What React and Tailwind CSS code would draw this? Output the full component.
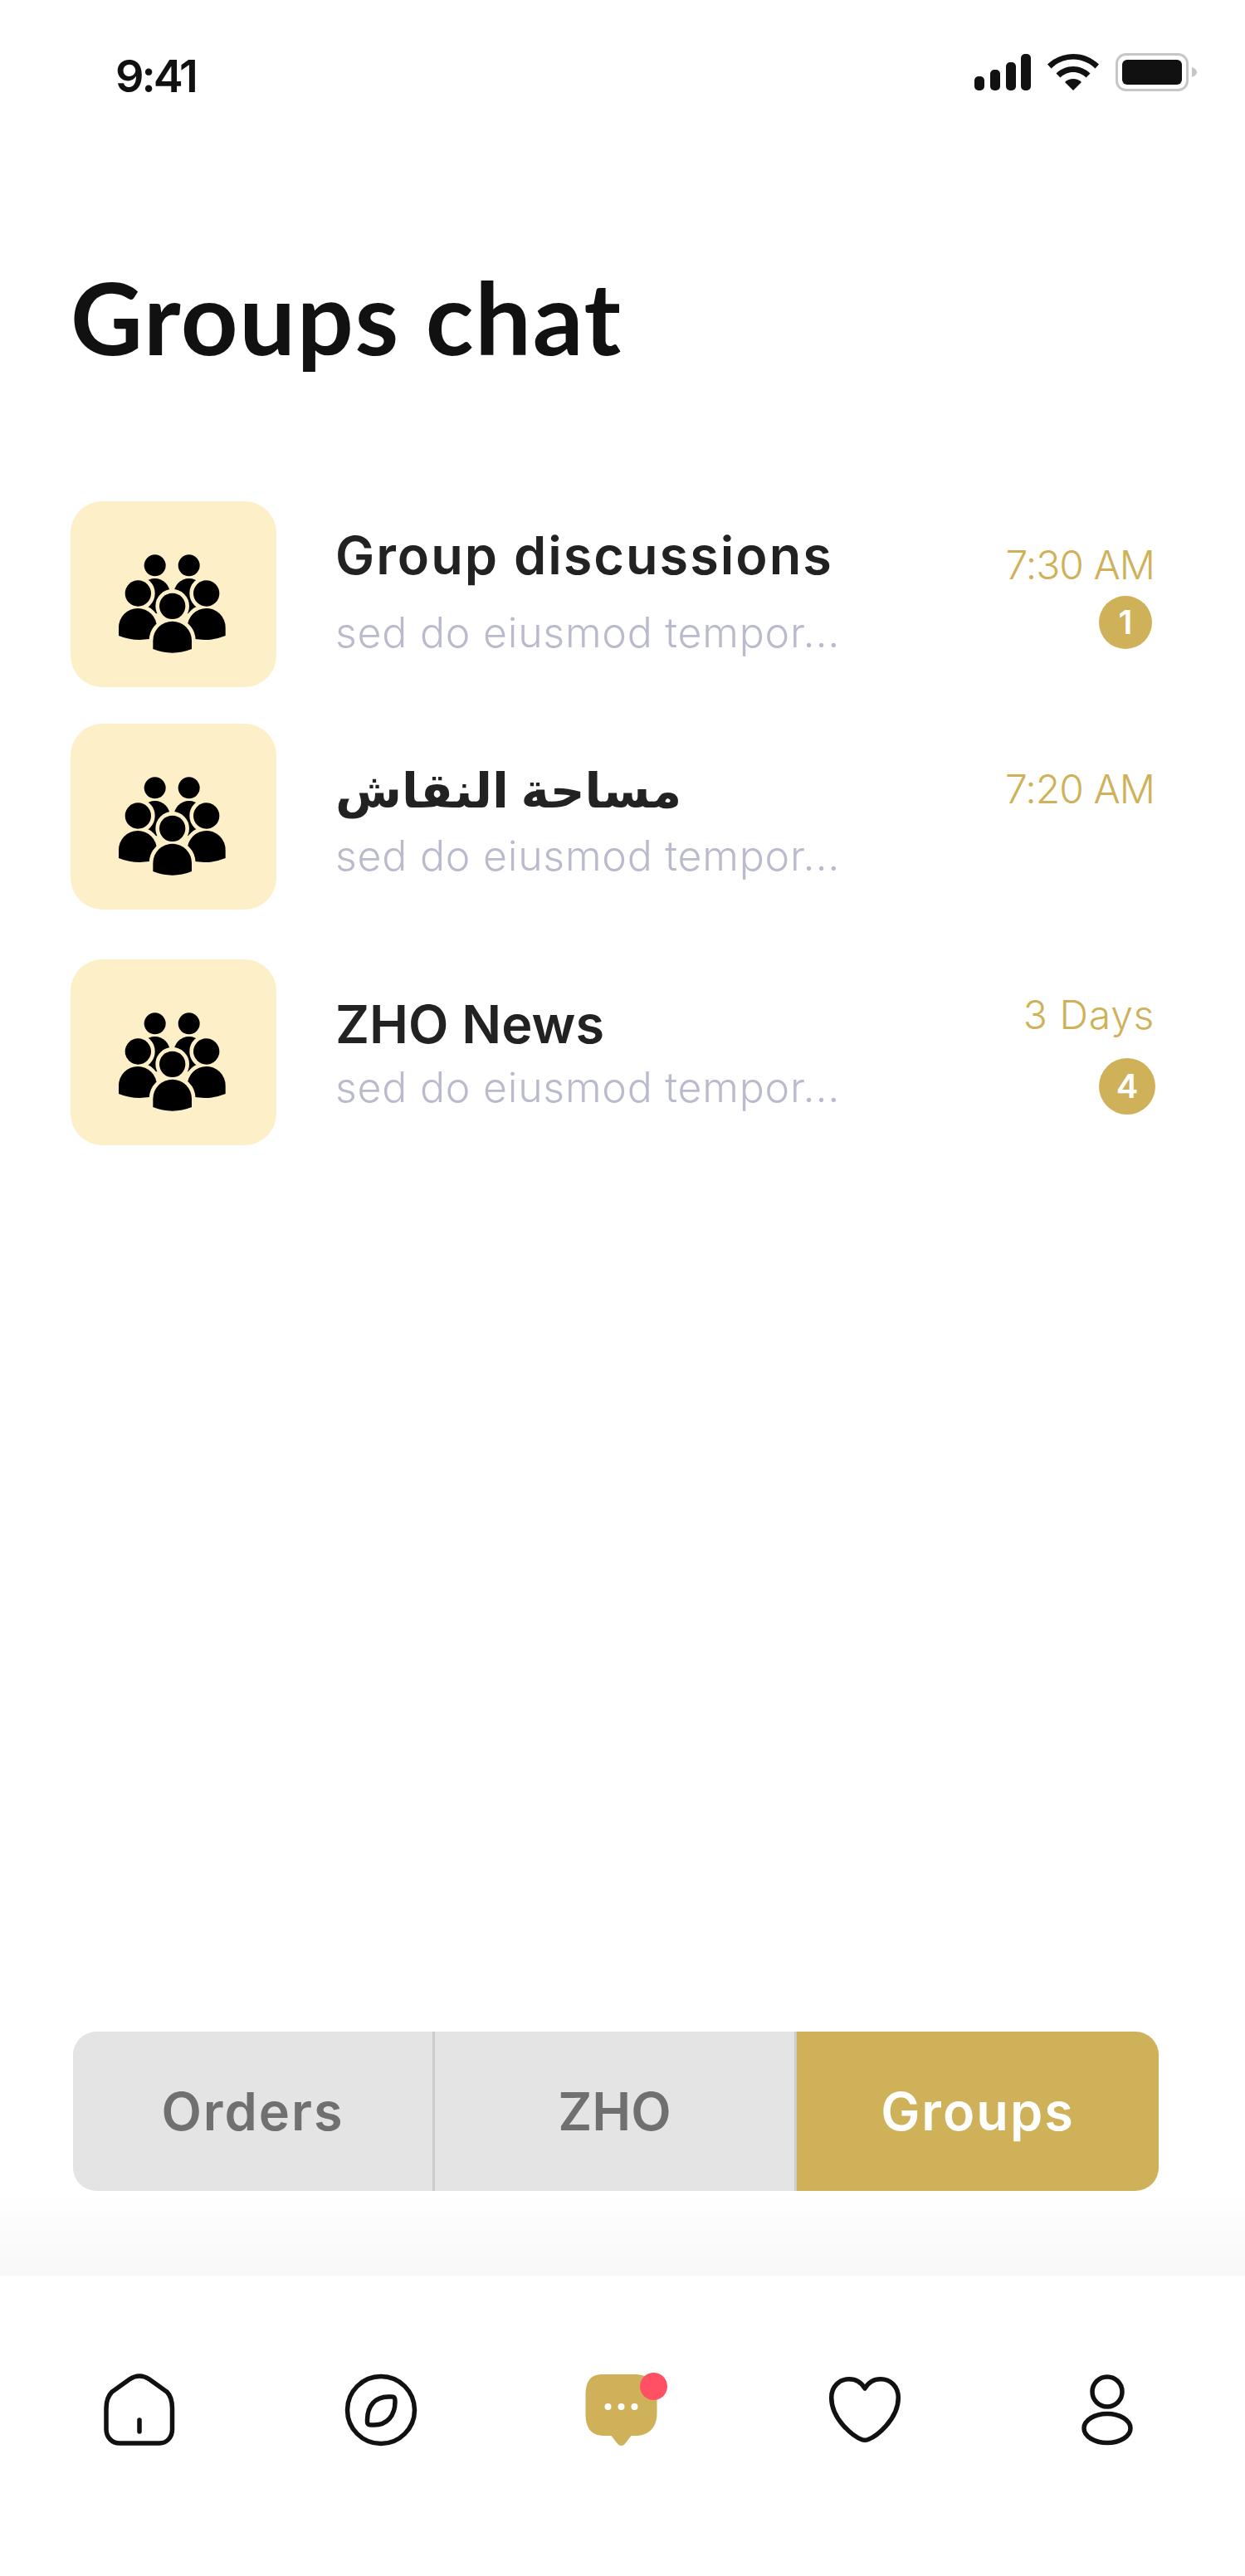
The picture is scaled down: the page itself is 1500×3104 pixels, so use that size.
import React from "react";

const ROWS = [
  {
    title: "Group discussions",
    titleClass: "text-[63px] tracking-[2px]",
    time: "7:30 AM",
    timeClass: "tracking-[-1px]",
    badge: "1",
    spacing: "mt-[162px]",
    textTop: "pt-[35px]",
    subTop: "mt-[39px]",
    timeTop: "pt-[53px]",
    badgeClass: "mt-[13px] mr-[2px] h-[64px] w-[64px]",
  },
  {
    title: "مساحة النقاش",
    titleClass: "text-[58px]",
    time: "7:20 AM",
    timeClass: "tracking-[-1px]",
    spacing: "mt-[44px]",
    textTop: "pt-[50px]",
    subTop: "mt-[25px]",
    timeTop: "pt-[55px]",
  },
  {
    title: "ZHO News",
    titleClass: "text-[63px] tracking-[0px]",
    time: "3 Days",
    timeClass: "tracking-[0.7px]",
    badge: "4",
    spacing: "mt-[60px]",
    textTop: "pt-[48px]",
    subTop: "mt-[22px]",
    timeTop: "pt-[43px]",
    badgeClass: "mt-[28px] -mr-[2px] h-[68px] w-[68px]",
  },
];

// drawn in reference pixels x3, each person gets a cream halo behind it
function Person({ head, body }) {
  return (
    <>
      <g fill="#fdefc8" stroke="#fdefc8" strokeWidth="28">
        <circle cx={head[0]} cy={head[1]} r="47" />
        <path d={body} />
      </g>
      <g fill="#000">
        <circle cx={head[0]} cy={head[1]} r="47" />
        <path d={body} />
      </g>
    </>
  );
}

function GroupIcon() {
  return (
    <svg width="135" height="124" viewBox="240 250 405 372" aria-hidden>
      <circle cx="380" cy="296" r="39" fill="#000" />
      <circle cx="503" cy="296" r="39" fill="#000" />
      <path d="M325 470V400A55 57 0 0 1 435 400V470Z" fill="#000" />
      <path d="M448 470V400A55 57 0 0 1 558 400V470Z" fill="#000" />
      <Person head={[319, 397]} body="M249 550V520A69 69 0 0 1 387 520V555Q318 578 249 550Z" />
      <Person head={[566, 397]} body="M497 555V520A69 69 0 0 1 635 520V550Q566 578 497 555Z" />
      <Person head={[443, 443]} body="M373 598V568A70 70 0 0 1 513 568V598Q443 626 373 598Z" />
    </svg>
  );
}

function GroupRow({ row }) {
  return (
    <div className={`flex h-[224px] ${row.spacing}`}>
      <div className="flex h-[224px] w-[248px] shrink-0 items-center justify-center rounded-[38px] bg-[#fdefc8] pt-[24px] pr-[3px]">
        <GroupIcon />
      </div>
      <div className={`ml-[71px] flex-1 ${row.textTop}`}>
        <p className={`h-[60px] leading-[60px] font-semibold text-[#222222] ${row.titleClass}`}>{row.title}</p>
        <p className={`text-[50px] leading-[48px] font-light tracking-[0.75px] text-[#b9bacb] ${row.subTop}`}>sed do eiusmod tempor...</p>
      </div>
      <div className={`flex flex-col items-end ${row.timeTop}`}>
        <p className={`-mr-[1px] text-[48px] leading-[48px] font-light text-[#cfb159] ${row.timeClass}`}>{row.time}</p>
        {row.badge ? (
          <span className={`flex items-center justify-center rounded-full bg-[#cfb159] text-[40px] font-semibold text-white ${row.badgeClass}`}>
            {row.badge}
          </span>
        ) : null}
      </div>
    </div>
  );
}

function StatusIcons() {
  return (
    <div className="flex items-center">
      <svg width="68" height="44" viewBox="0 0 68 44" fill="#111111" aria-hidden>
        <rect x="0" y="27" width="12" height="17" rx="5" />
        <rect x="19" y="19" width="12" height="25" rx="5" />
        <rect x="38" y="10" width="12" height="34" rx="5" />
        <rect x="56" y="0" width="12" height="44" rx="5" />
      </svg>
      <svg className="ml-[20px]" width="62" height="44" viewBox="0 0 62 44" fill="#111111" aria-hidden>
        <path d="M31 0C19 0 8.500 4.500 0 12.500L4.500 17.500C11.500 10.500 21 6.500 31 6.500S50.500 10.500 57.500 17.500L62 12.500C53.500 4.500 43 0 31 0Z" />
        <path d="M31 15C23.500 15 16 18 10.500 23.500L15.500 28.500C19.500 24.500 25 22 31 22S42.500 24.500 46.500 28.500L51.500 23.500C46 18 38.500 15 31 15Z" />
        <path d="M31 30C27 30 23.500 31.500 21 34L31 44L41 34C38.500 31.500 35 30 31 30Z" />
      </svg>
      <svg className="ml-[20px]" width="98" height="46" viewBox="0 0 98 46" aria-hidden>
        <rect x="1.500" y="1.500" width="85" height="43" rx="11" fill="none" stroke="#c6c6c6" strokeWidth="3" />
        <rect x="8" y="8" width="72" height="30" rx="6" fill="#111111" />
        <path d="M92 17C95 18 98 20 98 23S95 28 92 29Z" fill="#c6c6c6" />
      </svg>
    </div>
  );
}

function HomeIcon() {
  return (
    <svg width="96" height="96" viewBox="0 0 96 96" fill="none" stroke="#111111" strokeWidth="5.500" strokeLinecap="round" aria-hidden>
      <path d="M8 71V46C8 37 10 31 15 26L36 11Q48 3 60 11L81 26C86 31 87.500 37 87.500 46V71C87.500 81 81 88 72 88H24C15 88 8 81 8 71Z" />
      <path d="M48 60V74" />
    </svg>
  );
}

function CompassIcon() {
  return (
    <svg width="96" height="96" viewBox="0 0 96 96" fill="none" stroke="#111111" strokeWidth="5.500" aria-hidden>
      <circle cx="48" cy="48" r="40.500" />
      <path d="M36 66C31 66 31.500 63 31.500 60C31.500 43 41 32 57 32C63 32 65 31 65 38C65 55 55 66 40 66Z" />
    </svg>
  );
}

function ChatIcon() {
  return (
    <div className="relative h-[96px] w-[96px]">
      <svg width="96" height="96" viewBox="4.500 0 96 96" aria-hidden>
        <path
          d="M28 5H66C83 5 93 15 93 32V52C93 69 83 79 67 79H62L55 88C52 92 48 92 45 88L38 79H30C13 79 7 69 7 52V32C7 15 11 5 28 5Z"
          fill="#cfb159"
        />
        <circle cx="34" cy="44" r="4" fill="#fff" />
        <circle cx="50" cy="44" r="4" fill="#fff" />
        <circle cx="66" cy="44" r="4" fill="#fff" />
      </svg>
      <span className="absolute top-[3px] left-[68px] h-[33px] w-[33px] rounded-full bg-[#ff5064]" />
    </div>
  );
}

function HeartIcon() {
  return (
    <svg width="96" height="96" viewBox="0 0 96 96" fill="none" stroke="#111111" strokeWidth="5.500" strokeLinejoin="round" aria-hidden>
      <path d="M48 22C44 15 37 10.700 29 10.700C17 10.700 7.700 20 7.700 33C7.700 60 35 80 44 83.500C46.500 84.500 49.500 84.500 52 83.500C61 80 88.300 60 88.300 33C88.300 20 79 10.700 67 10.700C59 10.700 52 15 48 22Z" />
    </svg>
  );
}

function UserIcon() {
  return (
    <svg width="96" height="96" viewBox="0 0 96 96" fill="none" stroke="#111111" strokeWidth="5.500" aria-hidden>
      <circle cx="49" cy="26" r="18" />
      <ellipse cx="49" cy="70" rx="28" ry="17.500" />
    </svg>
  );
}

export default function App() {
  return (
    <div className="flex h-[3104px] w-[1500px] flex-col bg-white font-['Inter','DejaVu_Sans',sans-serif]">
      <div className="flex h-[110px] items-start justify-between pt-[64px] pr-[58px] pl-[139px]">
        <span className="mt-[3px] text-[54px] leading-[50px] font-semibold tracking-[-3px] text-[#111111]">9:41</span>
        <StatusIcons />
      </div>

      <div className="flex-1 pr-[110px] pl-[85px]">
        <h1 className="mt-[212px] h-[120px] font-['Lato',sans-serif] text-[120px] leading-[120px] font-bold tracking-[1.7px] text-[#111111]">Groups chat</h1>
        {ROWS.map((row) => (
          <GroupRow key={row.title} row={row} />
        ))}
      </div>

      <div className="ml-[88px] flex h-[192px] w-[1308px] overflow-hidden rounded-[28px] text-[63px] font-semibold">
        <div className="flex w-[436px] items-center justify-center border-r-[3px] border-[#cccccc] bg-[#e4e4e4] tracking-[2px] text-[#707070]">Orders</div>
        <div className="flex w-[436px] items-center justify-center border-r-[3px] border-[#cccccc] bg-[#e4e4e4] text-[#707070]">ZHO</div>
        <div className="flex flex-1 items-center justify-center bg-[#cfb159] tracking-[2px] text-white">Groups</div>
      </div>

      <div className="h-[102px] bg-gradient-to-b from-white to-[#f8f8f8]" />

      <nav className="flex h-[362px] items-start justify-between bg-white pt-[114px] pr-[119px] pl-[120px]">
        <HomeIcon />
        <CompassIcon />
        <ChatIcon />
        <HeartIcon />
        <UserIcon />
      </nav>
    </div>
  );
}
